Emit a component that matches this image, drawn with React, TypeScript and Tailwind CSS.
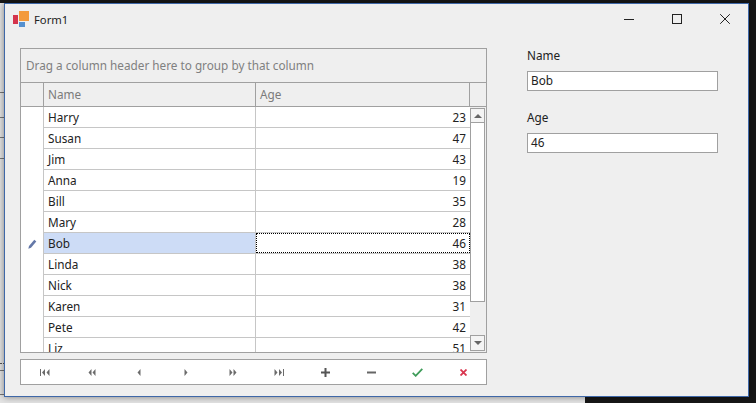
const ROWS = [
  ["Harry", 23],
  ["Susan", 47],
  ["Jim", 43],
  ["Anna", 19],
  ["Bill", 35],
  ["Mary", 28],
  ["Bob", 46],
  ["Linda", 38],
  ["Nick", 38],
  ["Karen", 31],
  ["Pete", 42],
  ["Liz", 51],
] as const;

function NavIcon({ name }: { name: string }) {
  const gray = "#6b6b6b";
  if (name === "first")
    return (
      <svg width="10" height="7" viewBox="0 0 10 7" fill={gray}>
        <rect x="0" y="0" width="1" height="7" />
        <path d="M5 0v7L2 3.500zM9.500 0v7l-3-3.500z" />
      </svg>
    );
  if (name === "prevPage")
    return (
      <svg width="8" height="7" viewBox="0 0 8 7" fill={gray}>
        <path d="M3.500 0v7L0.500 3.500zM7.500 0v7l-3-3.500z" />
      </svg>
    );
  if (name === "prev")
    return (
      <svg width="4" height="7" viewBox="0 0 4 7" fill={gray}>
        <path d="M3.500 0v7L0.500 3.500z" />
      </svg>
    );
  if (name === "next")
    return (
      <svg width="4" height="7" viewBox="0 0 4 7" fill={gray}>
        <path d="M0.500 0v7l3-3.500z" />
      </svg>
    );
  if (name === "nextPage")
    return (
      <svg width="8" height="7" viewBox="0 0 8 7" fill={gray}>
        <path d="M0.500 0v7l3-3.500zM4.500 0v7l3-3.500z" />
      </svg>
    );
  if (name === "last")
    return (
      <svg width="10" height="7" viewBox="0 0 10 7" fill={gray}>
        <path d="M0.500 0v7l3-3.500zM5 0v7l3-3.500z" />
        <rect x="9" y="0" width="1" height="7" />
      </svg>
    );
  if (name === "add")
    return (
      <svg width="9" height="9" viewBox="0 0 9 9" fill="#555555">
        <path d="M3.500 0h2v3.500H9v2H5.500V9h-2V5.500H0v-2h3.500z" />
      </svg>
    );
  if (name === "remove")
    return (
      <svg width="9" height="9" viewBox="0 0 9 9" fill="#666666">
        <rect x="0" y="3.500" width="9" height="2" />
      </svg>
    );
  if (name === "check")
    return (
      <svg width="11" height="9" viewBox="0 0 11 9" fill="none" stroke="#3f9c5a" strokeWidth="1.800">
        <path d="M0.700 4.800l3 3L10.300 0.800" />
      </svg>
    );
  return (
    <svg width="7" height="7" viewBox="0 0 7 7" fill="none" stroke="#d9364f" strokeWidth="1.800">
      <path d="M0.500 0.500l6 6M6.500 0.500l-6 6" />
    </svg>
  );
}

const NAV = [
  { name: "first", cls: "w-[47px]" },
  { name: "prevPage", cls: "w-[47px]" },
  { name: "prev", cls: "w-[47px]" },
  { name: "next", cls: "w-[47px]" },
  { name: "nextPage", cls: "w-[47px]" },
  { name: "last", cls: "w-[46px]" },
  { name: "add", cls: "w-[46px]" },
  { name: "remove", cls: "w-[46px]" },
  { name: "check", cls: "w-[46px]" },
  { name: "cancel", cls: "w-[46px]" },
];

function App() {
  return (
    <div className="relative h-[403px] w-[756px] overflow-hidden bg-[#171717] font-['Noto_Sans',sans-serif] text-[11.75px] text-[#222222]">
      {/* window behind */}
      <div className="absolute bottom-0 left-0 top-[3px] w-[585px] bg-[#e4e4e4]">
        <div className="absolute left-0 top-[89px] h-px w-[4px] bg-[#777777]" />
        <div className="absolute left-0 top-[114px] h-px w-[4px] bg-[#777777]" />
        <div className="absolute left-0 top-[134px] h-px w-[4px] bg-[#777777]" />
        <div className="absolute left-0 top-[155px] h-px w-[4px] bg-[#777777]" />
        <div className="absolute left-0 top-[360px] h-px w-[4px] border-t border-dotted border-[#555555]" />
        <div className="absolute left-0 top-[367px] h-px w-[4px] bg-[#777777]" />
        <div className="absolute left-0 top-[391px] h-px w-[4px] bg-[#777777]" />
      </div>

      {/* Form1 */}
      <div className="absolute left-[4px] top-[3px] flex h-[394px] w-[745px] flex-col border border-[#3f68a8] bg-[#efefef] shadow-[0_0_7px_rgba(0,0,0,0.45)]">
        <div className="flex h-[44px] shrink-0 items-start">
          <svg className="ml-[8px] mt-[7px]" width="17" height="17" viewBox="0 0 17 17">
            <rect x="0" y="4" width="5" height="9" fill="#d4344c" />
            <rect x="6" y="0" width="10" height="10" fill="#f39a3c" />
            <rect x="6" y="11" width="6" height="5" fill="#5590cf" />
          </svg>
          <span className="ml-[4px] mt-[7px] text-[11.25px] leading-[17px]">Form1</span>
          <div className="ml-auto mr-[18px] mt-[10px] flex items-start gap-[38px]">
            <svg width="10" height="10" viewBox="0 0 10 10" stroke="#222222" fill="none">
              <path d="M0 5.500h10" />
            </svg>
            <svg width="10" height="10" viewBox="0 0 10 10" stroke="#222222" fill="none">
              <rect x="0.500" y="0.500" width="9" height="9" />
            </svg>
            <svg width="10" height="10" viewBox="0 0 10 10" stroke="#222222" fill="none">
              <path d="M0.200 0.200l9.600 9.600M9.800 0.200L0.200 9.800" />
            </svg>
          </div>
        </div>

        <div className="flex items-start pl-[15px]">
          <div className="flex w-[467px] shrink-0 flex-col">
            {/* grid */}
            <div className="flex h-[305px] flex-col overflow-hidden border border-[#a0a0a0]">
              <div className="flex h-[34px] shrink-0 items-center border-b border-[#a0a0a0] pl-[5px] pt-[1px] text-[#808080]">
                Drag a column header here to group by that column
              </div>
              <div className="flex h-[24px] shrink-0 border-b border-[#a0a0a0] text-[#7b7b7b]">
                <div className="w-[23px] shrink-0 border-r border-[#a0a0a0]" />
                <div className="flex w-[212px] shrink-0 items-center border-r border-[#a0a0a0] pl-[4px]">Name</div>
                <div className="flex w-[214px] shrink-0 items-center border-r border-[#a0a0a0] pl-[4px]">Age</div>
                <div className="flex-1" />
              </div>
              <div className="flex min-h-0 flex-1">
                <div className="w-[449px] shrink-0 overflow-hidden bg-white">
                  {ROWS.map(([name, age]) => {
                    const current = name === "Bob";
                    return (
                      <div key={name} className="flex h-[21px]">
                        <div className="flex w-[23px] shrink-0 items-center justify-center border-r border-[#c6c6c6]">
                          {current && (
                            <svg width="9" height="10" viewBox="0 0 9 10">
                              <path d="M0.300 9.700l0.700-2.800L6.300 0.700l2 1.700L3 8.700z" fill="#6478a8" />
                            </svg>
                          )}
                        </div>
                        <div
                          className={`flex w-[212px] shrink-0 items-center border-r border-b border-[#c6c6c6] pl-[4px] pt-[1px] ${
                            current ? "bg-[#cddcf6]" : ""
                          }`}
                        >
                          {name}
                        </div>
                        <div className="w-[214px] shrink-0 border-b border-[#c6c6c6]">
                          <div
                            className={`flex h-full items-center justify-end pt-[1px] ${
                              current ? "border border-dotted border-black pr-[3px]" : "pr-[4px]"
                            }`}
                          >
                            {age}
                          </div>
                        </div>
                      </div>
                    );
                  })}
                </div>
                {/* scrollbar */}
                <div className="flex flex-1 flex-col pt-[1px] pb-[1px] pr-[1px]">
                  <div className="flex h-[15px] shrink-0 items-center justify-center border border-[#a0a0a0] bg-[#f4f4f4]">
                    <svg width="8" height="4" viewBox="0 0 8 4" fill="#666666">
                      <path d="M4 0l4 4H0z" />
                    </svg>
                  </div>
                  <div className="h-[179px] shrink-0 border border-t-0 border-[#a0a0a0] bg-white" />
                  <div className="flex-1" />
                  <div className="flex h-[16px] shrink-0 items-center justify-center border border-[#a0a0a0] bg-[#f4f4f4]">
                    <svg width="8" height="4" viewBox="0 0 8 4" fill="#666666">
                      <path d="M0 0h8L4 4z" />
                    </svg>
                  </div>
                </div>
              </div>
            </div>

            {/* navigator */}
            <div className="mt-[6px] flex h-[26px] overflow-hidden border border-[#a0a0a0] bg-white">
              {NAV.map((item) => (
                <div key={item.name} className={`flex shrink-0 items-center justify-center ${item.cls}`}>
                  <NavIcon name={item.name} />
                </div>
              ))}
            </div>
          </div>

          {/* edit panel */}
          <div className="ml-[40px] w-[191px]">
            <label className="-mt-[1px] block leading-[17px]">Name</label>
            <div className="mt-[7px] flex h-[20px] items-center border border-[#a0a0a0] bg-white pl-[3px]">Bob</div>
            <label className="mt-[18px] block leading-[17px]">Age</label>
            <div className="mt-[7px] flex h-[20px] items-center border border-[#a0a0a0] bg-white pl-[3px]">46</div>
          </div>
        </div>
      </div>
    </div>
  );
}

export default App;
